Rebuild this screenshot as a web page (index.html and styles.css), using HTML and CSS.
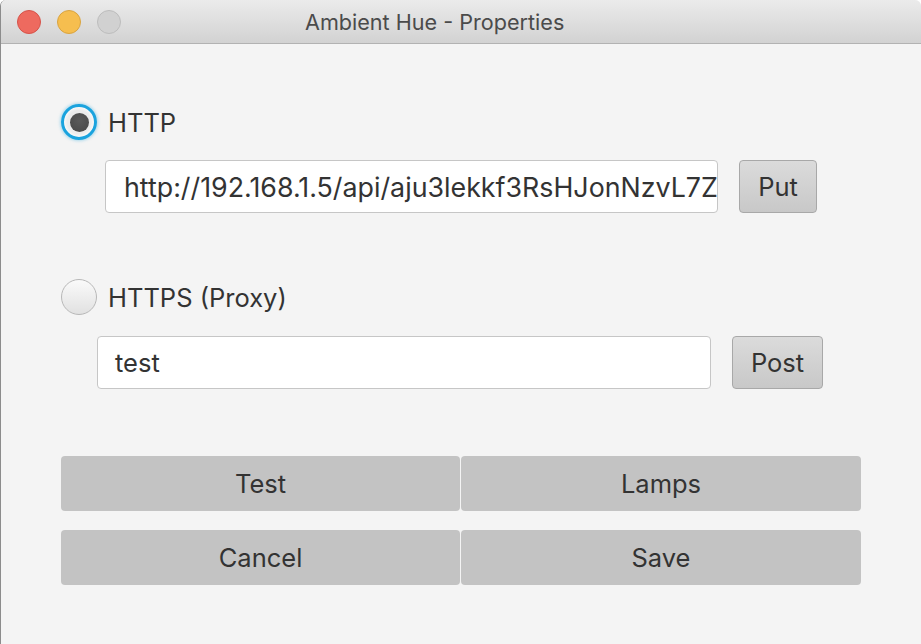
FILE: index.html
```html
<!DOCTYPE html>
<html>
<head>
<meta charset="utf-8">
<title>Ambient Hue - Properties</title>
<link rel="stylesheet" href="styles.css">
</head>
<body>
<div class="window">
  <header class="titlebar">
    <div class="lights">
      <span class="light red"></span>
      <span class="light yellow"></span>
      <span class="light gray"></span>
    </div>
    <div class="title">Ambient Hue - Properties</div>
  </header>
  <main class="content">
    <label class="radio-row first">
      <span class="radio focused checked"><span class="dot"></span></span>
      <span class="radio-label">HTTP</span>
    </label>
    <div class="field-row row-http">
      <div class="field field-http"><span class="field-text">http://192.168.1.5/api/aju3lekkf3RsHJonNzvL7Z</span></div>
      <button class="small-btn put">Put</button>
    </div>
    <label class="radio-row second">
      <span class="radio"></span>
      <span class="radio-label">HTTPS (Proxy)</span>
    </label>
    <div class="field-row row-https">
      <div class="field field-https"><span class="field-text">test</span></div>
      <button class="small-btn post">Post</button>
    </div>
    <div class="actions">
      <button class="action">Test</button>
      <button class="action">Lamps</button>
      <button class="action">Cancel</button>
      <button class="action">Save</button>
    </div>
  </main>
</div>
</body>
</html>
```
FILE: styles.css
```css
* { box-sizing: border-box; }
html, body {
  margin: 0;
  padding: 0;
  width: 921px;
  height: 644px;
  background: #ffffff;
  overflow: hidden;
}
body {
  font-family: "Inter", "Liberation Sans", sans-serif;
  color: #333333;
}
.window {
  width: 921px;
  height: 644px;
  background: #f4f4f4;
  border-radius: 6px 6px 0 0;
  overflow: hidden;
  border-left: 1px solid #8c8c8c;
  display: flex;
  flex-direction: column;
}
.titlebar {
  height: 44px;
  flex: 0 0 44px;
  background: linear-gradient(#ebebeb, #d2d2d2);
  border-bottom: 1px solid #b2b2b2;
  display: flex;
  align-items: center;
  margin-left: -1px;
}
.lights {
  display: flex;
  gap: 16px;
  padding-left: 17px;
}
.light {
  width: 24px;
  height: 24px;
  border-radius: 50%;
  display: block;
}
.light.red { background: #ee6a5f; border: 1px solid #d6534a; }
.light.yellow { background: #f6be4f; border: 1px solid #d9a441; }
.light.gray { background: #d1d1d1; border: 1px solid #bdbdbd; }
.title {
  margin-left: 184px;
  font-size: 21.6px;
  color: #4b4b4b;
  padding-top: 1px;
}
.content {
  display: flex;
  flex-direction: column;
  padding-left: 60px;
}
.radio-row {
  display: flex;
  align-items: center;
  height: 36px;
}
.radio-row.first { margin-top: 60px; }
.radio-row.second { margin-top: 66px; }
.radio {
  width: 36px;
  height: 36px;
  border-radius: 50%;
  background: linear-gradient(#fafafa, #e1e1e1);
  border: 1px solid #b8b8b8;
  display: flex;
  align-items: center;
  justify-content: center;
  flex: 0 0 36px;
}
.radio.focused {
  border: 3px solid #1aa3de;
  box-shadow: 0 0 3px 1px rgba(26, 163, 222, 0.35);
  background: radial-gradient(circle, #ececec 55%, #f8f8f8 70%);
}
.dot {
  width: 19px;
  height: 19px;
  border-radius: 50%;
  background: radial-gradient(circle at 50% 40%, #5a5a5a, #474747);
  display: block;
}
.radio-label {
  margin-left: 11px;
  font-size: 25.5px;
  color: #333333;
}
.field-row {
  display: flex;
  height: 53px;
  gap: 21px;
}
.row-http { margin-top: 20px; margin-left: 44px; }
.row-https { margin-top: 21px; margin-left: 36px; }
.field {
  height: 53px;
  background: #ffffff;
  border: 1px solid #c6c6c6;
  border-radius: 4px;
  padding-left: 18px;
  overflow: hidden;
  white-space: nowrap;
  display: flex;
  align-items: center;
  font-size: 26.8px;
  color: #333333;
}
.field-http { width: 613px; }
.field-https { width: 614px; padding-left: 17px; font-size: 25.5px; }
.small-btn {
  height: 53px;
  border: 1px solid #a8a8a8;
  border-radius: 4px;
  background: linear-gradient(#dbdbdb, #c8c8c8);
  font-family: inherit;
  font-size: 25.5px;
  color: #333333;
  padding: 0;
}
.put { width: 78px; }
.post { width: 91px; }
.actions {
  margin-top: 67px;
  width: 800px;
  display: grid;
  grid-template-columns: 399px 400px;
  column-gap: 1px;
  row-gap: 19px;
}
.action {
  height: 55px;
  border: none;
  border-radius: 4px;
  background: #c3c3c3;
  font-family: inherit;
  font-size: 25.5px;
  color: #333333;
  padding: 0;
}
```
